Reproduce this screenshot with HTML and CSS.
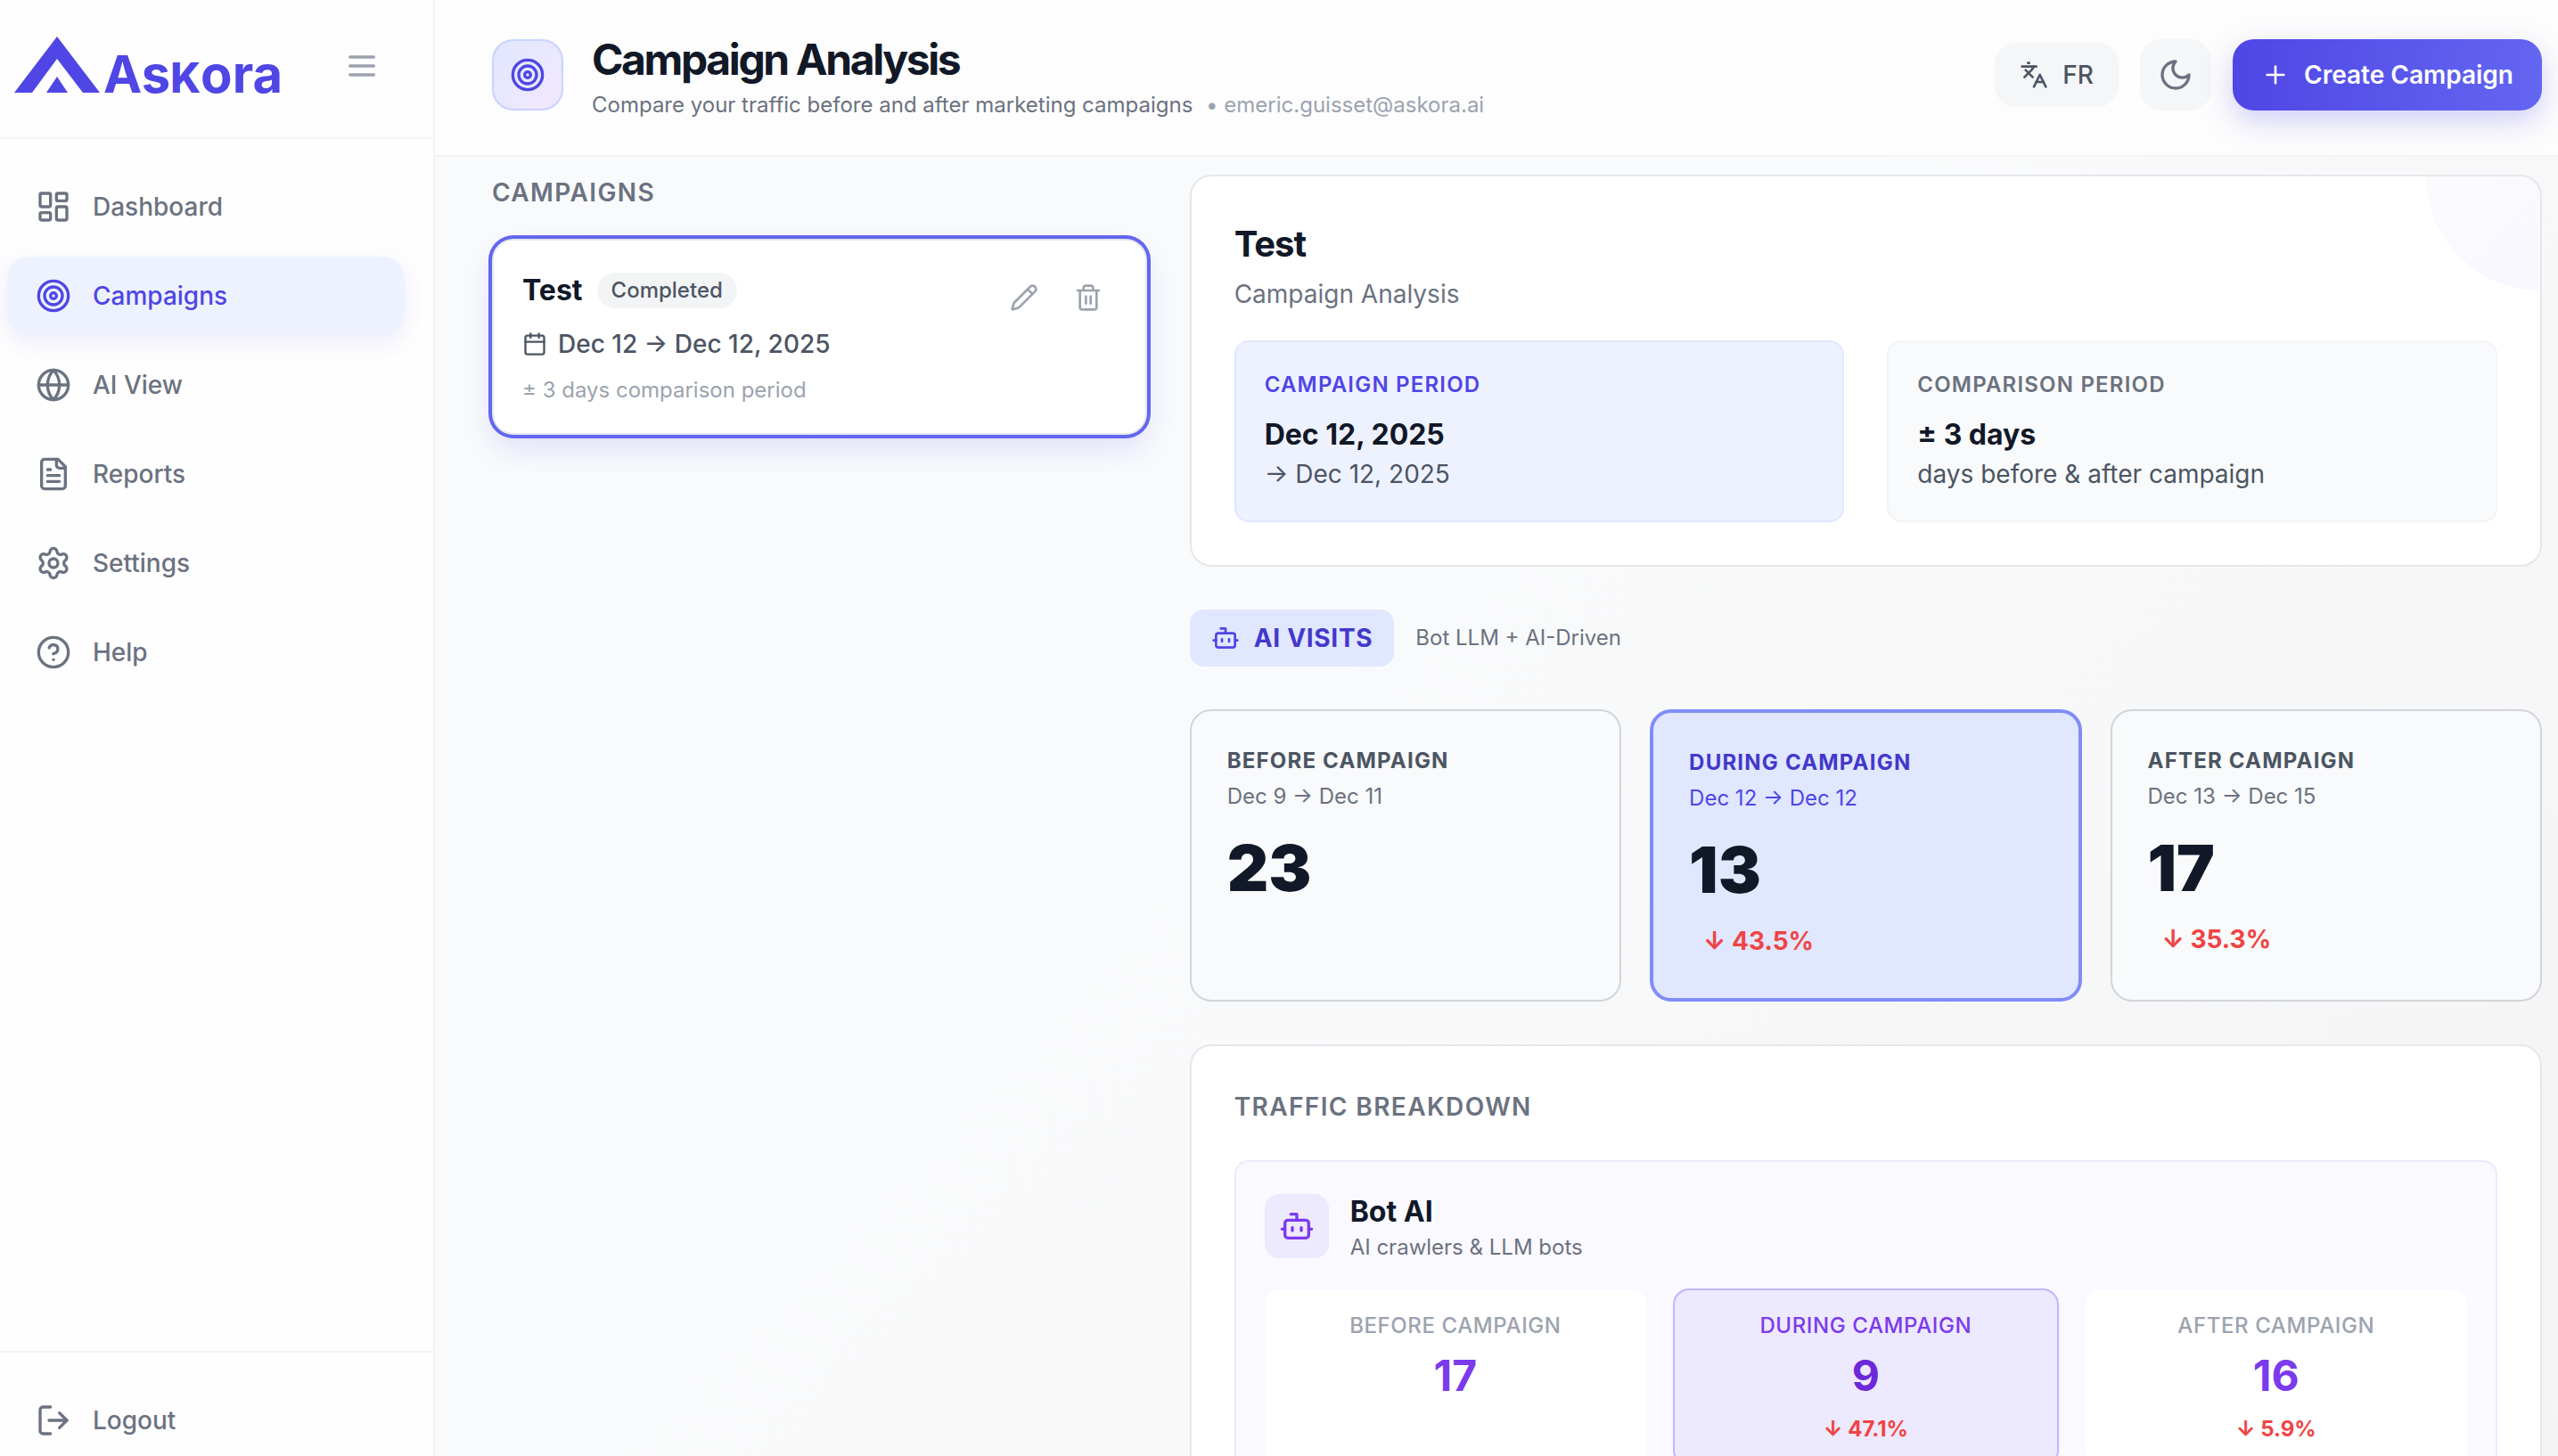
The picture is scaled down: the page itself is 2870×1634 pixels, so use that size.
FILE: index.html
```html
<!DOCTYPE html>
<html lang="en">
<head>
  <meta charset="UTF-8">
  <meta name="viewport" content="width=device-width, initial-scale=1.0">
  <title>Campaign Analysis - Askora</title>
  <link rel="stylesheet" href="styles.css">
</head>
<body>
  <!-- shared icons -->
  <svg class="sprite" aria-hidden="true">
    <symbol id="i-menu" viewBox="0 0 24 24"><path d="M4 6h16M4 12h16M4 18h16"/></symbol>
    <symbol id="i-dashboard" viewBox="0 0 24 24"><rect x="3" y="3" width="7" height="9" rx="1"/><rect x="14" y="3" width="7" height="5" rx="1"/><rect x="14" y="12" width="7" height="9" rx="1"/><rect x="3" y="16" width="7" height="5" rx="1"/></symbol>
    <symbol id="i-target" viewBox="0 0 24 24"><circle cx="12" cy="12" r="10"/><circle cx="12" cy="12" r="6"/><circle cx="12" cy="12" r="2"/></symbol>
    <symbol id="i-globe" viewBox="0 0 24 24"><circle cx="12" cy="12" r="10"/><path d="M12 2a14.5 14.5 0 0 0 0 20 14.5 14.5 0 0 0 0-20"/><path d="M2 12h20"/></symbol>
    <symbol id="i-file" viewBox="0 0 24 24"><path d="M15 2H6a2 2 0 0 0-2 2v16a2 2 0 0 0 2 2h12a2 2 0 0 0 2-2V7Z"/><path d="M14 2v4a2 2 0 0 0 2 2h4"/><path d="M10 9H8M16 13H8M16 17H8"/></symbol>
    <symbol id="i-settings" viewBox="0 0 24 24"><path d="M9.671 4.136a2.34 2.34 0 0 1 4.659 0 2.34 2.34 0 0 0 3.319 1.915 2.34 2.34 0 0 1 2.33 4.033 2.34 2.34 0 0 0 0 3.831 2.34 2.34 0 0 1-2.33 4.033 2.34 2.34 0 0 0-3.319 1.915 2.34 2.34 0 0 1-4.659 0 2.34 2.34 0 0 0-3.32-1.915 2.34 2.34 0 0 1-2.33-4.033 2.34 2.34 0 0 0 0-3.831A2.34 2.34 0 0 1 6.35 6.051a2.34 2.34 0 0 0 3.319-1.915"/><circle cx="12" cy="12" r="3"/></symbol>
    <symbol id="i-help" viewBox="0 0 24 24"><circle cx="12" cy="12" r="10"/><path d="M9.09 9a3 3 0 0 1 5.83 1c0 2-3 3-3 3"/><path d="M12 17h.01"/></symbol>
    <symbol id="i-logout" viewBox="0 0 24 24"><path d="M10 3H5a2 2 0 0 0-2 2v14a2 2 0 0 0 2 2h5"/><path d="m16 17 5-5-5-5"/><path d="M21 12H9"/></symbol>
    <symbol id="i-languages" viewBox="0 0 24 24"><path d="m5 8 6 6"/><path d="m4 14 6-6 2-3"/><path d="M2 5h12"/><path d="M7 2h1"/><path d="m22 22-5-10-5 10"/><path d="M14 18h6"/></symbol>
    <symbol id="i-moon" viewBox="0 0 24 24"><path d="M12 3a6 6 0 0 0 9 9 9 9 0 1 1-9-9Z"/></symbol>
    <symbol id="i-plus" viewBox="0 0 24 24"><path d="M5 12h14M12 5v14"/></symbol>
    <symbol id="i-pencil" viewBox="0 0 24 24"><path d="M21.174 6.812a1 1 0 0 0-3.986-3.987L3.842 16.174a2 2 0 0 0-.5.83l-1.321 4.352a.5.5 0 0 0 .623.622l4.353-1.32a2 2 0 0 0 .83-.497z"/><path d="m15 5 4 4"/></symbol>
    <symbol id="i-trash" viewBox="0 0 24 24"><path d="M3 6h18"/><path d="M19 6v14a2 2 0 0 1-2 2H7a2 2 0 0 1-2-2V6"/><path d="M8 6V4a2 2 0 0 1 2-2h4a2 2 0 0 1 2 2v2"/><path d="M10 11v6M14 11v6"/></symbol>
    <symbol id="i-calendar" viewBox="0 0 24 24"><path d="M8 2v4M16 2v4"/><rect x="3" y="4" width="18" height="18" rx="2"/><path d="M3 10h18"/></symbol>
    <symbol id="i-bot" viewBox="0 0 24 24"><path d="M12 8V4H8"/><rect x="4" y="8" width="16" height="12" rx="2"/><path d="M2 14h2M20 14h2M15 13v2M9 13v2"/></symbol>
  </svg>

  <div class="app">
    <aside class="sidebar">
      <div class="sidebar-top">
        <a class="logo" href="#">
          <svg class="logo-mark" viewBox="0 0 96 63" aria-hidden="true"><path d="M48 0 96 63H77L48 25 20 63H0Z"/><path d="M48 45 60 63H36Z"/></svg>
          <span>As<span class="logo-k">k</span>ora</span>
        </a>
        <button class="menu-btn" aria-label="Toggle menu"><svg class="icon icon-lg"><use href="#i-menu"/></svg></button>
      </div>
      <nav class="nav">
        <a class="nav-item" href="#"><svg class="icon icon-lg"><use href="#i-dashboard"/></svg>Dashboard</a>
        <a class="nav-item active" href="#"><svg class="icon icon-lg"><use href="#i-target"/></svg>Campaigns</a>
        <a class="nav-item" href="#"><svg class="icon icon-lg"><use href="#i-globe"/></svg>AI View</a>
        <a class="nav-item" href="#"><svg class="icon icon-lg"><use href="#i-file"/></svg>Reports</a>
        <a class="nav-item" href="#"><svg class="icon icon-lg"><use href="#i-settings"/></svg>Settings</a>
        <a class="nav-item" href="#"><svg class="icon icon-lg"><use href="#i-help"/></svg>Help</a>
      </nav>
      <div class="sidebar-bottom">
        <button class="nav-item"><svg class="icon icon-lg"><use href="#i-logout"/></svg>Logout</button>
      </div>
    </aside>

    <div class="page">
      <header class="header">
        <div class="header-icon"><svg class="icon icon-lg"><use href="#i-target"/></svg></div>
        <div class="header-text">
          <h1>Campaign Analysis</h1>
          <p>Compare your traffic before and after marketing campaigns <span class="email">• emeric.guisset@askora.ai</span></p>
        </div>
        <div class="header-actions">
          <button class="lang-btn"><svg class="icon icon-md"><use href="#i-languages"/></svg>FR</button>
          <button class="theme-btn" aria-label="Dark mode"><svg class="icon icon-lg"><use href="#i-moon"/></svg></button>
          <button class="create-btn"><svg class="icon icon-md"><use href="#i-plus"/></svg>Create Campaign</button>
        </div>
      </header>

      <main class="content">
        <section class="campaigns">
          <h2 class="section-title">Campaigns</h2>
          <article class="campaign">
            <div class="campaign-info">
              <div class="campaign-name">
                <h3>Test</h3>
                <span class="badge">Completed</span>
              </div>
              <p class="campaign-dates"><svg class="icon icon-sm"><use href="#i-calendar"/></svg>Dec 12 → Dec 12, 2025</p>
              <p class="campaign-note">± 3 days comparison period</p>
            </div>
            <div class="campaign-actions">
              <button aria-label="Edit campaign"><svg class="icon icon-md"><use href="#i-pencil"/></svg></button>
              <button aria-label="Delete campaign"><svg class="icon icon-md"><use href="#i-trash"/></svg></button>
            </div>
          </article>
        </section>

        <section class="analysis">
          <div class="card summary">
            <h2>Test</h2>
            <p class="summary-sub">Campaign Analysis</p>
            <div class="periods">
              <div class="period current">
                <h3>Campaign period</h3>
                <p class="period-value">Dec 12, 2025</p>
                <p class="period-text">→ Dec 12, 2025</p>
              </div>
              <div class="period">
                <h3>Comparison period</h3>
                <p class="period-value">± 3 days</p>
                <p class="period-text">days before &amp; after campaign</p>
              </div>
            </div>
          </div>

          <div class="visits-head">
            <h2 class="visits-tag"><svg class="icon icon-md"><use href="#i-bot"/></svg>AI VISITS</h2>
            <span>Bot LLM + AI-Driven</span>
          </div>

          <div class="stats">
            <div class="stat">
              <h3>Before campaign</h3>
              <p class="stat-dates">Dec 9 → Dec 11</p>
              <p class="stat-value">23</p>
            </div>
            <div class="stat during">
              <h3>During campaign</h3>
              <p class="stat-dates">Dec 12 → Dec 12</p>
              <p class="stat-value">13</p>
              <p class="stat-trend">↓ 43.5%</p>
            </div>
            <div class="stat">
              <h3>After campaign</h3>
              <p class="stat-dates">Dec 13 → Dec 15</p>
              <p class="stat-value">17</p>
              <p class="stat-trend">↓ 35.3%</p>
            </div>
          </div>

          <div class="card">
            <h2 class="section-title">Traffic breakdown</h2>
            <div class="source">
              <div class="source-head">
                <div class="source-icon"><svg class="icon icon-lg"><use href="#i-bot"/></svg></div>
                <div>
                  <h3>Bot AI</h3>
                  <p>AI crawlers &amp; LLM bots</p>
                </div>
              </div>
              <div class="source-grid">
                <div class="cell">
                  <h4>Before campaign</h4>
                  <p class="cell-value">17</p>
                </div>
                <div class="cell during">
                  <h4>During campaign</h4>
                  <p class="cell-value">9</p>
                  <p class="cell-trend">↓ 47.1%</p>
                </div>
                <div class="cell">
                  <h4>After campaign</h4>
                  <p class="cell-value">16</p>
                  <p class="cell-trend">↓ 5.9%</p>
                </div>
              </div>
            </div>
          </div>
        </section>
      </main>
    </div>
  </div>
</body>
</html>
```

FILE: styles.css
```css
* {
  box-sizing: border-box;
}
body {
  margin: 0;
  font-family: Inter, "Liberation Sans", sans-serif;
  font-size: 28px;
  line-height: 40px;
  color: #111827;
  background: #f9fafb;
}
h1, h2, h3, h4, p {
  margin: 0;
}
button {
  border: 0;
  padding: 0;
  background: none;
  font: inherit;
  color: inherit;
  cursor: pointer;
}
a {
  color: inherit;
  text-decoration: none;
}
.sprite {
  display: none;
}
.icon {
  flex: none;
  display: block;
  fill: none;
  stroke: currentColor;
  stroke-width: 2;
  stroke-linecap: round;
  stroke-linejoin: round;
}
.icon-sm {
  width: 28px;
  height: 28px;
}
.icon-md {
  width: 32px;
  height: 32px;
}
.icon-lg {
  width: 40px;
  height: 40px;
}
.app {
  display: flex;
  height: 100vh;
  overflow: hidden;
  background: linear-gradient(135deg, #f8fafc, #f9fafb 50%, #f4f4f5);
}

/* sidebar */
.sidebar {
  flex: none;
  display: flex;
  flex-direction: column;
  width: 488px;
  background: #fefefe;
  border-right: 2px solid #f3f4f6;
}
.sidebar-top {
  display: flex;
  justify-content: space-between;
  align-items: center;
  height: 156px;
  padding: 0 60px 6px 16px;
  border-bottom: 2px solid #f3f4f6;
}
.logo {
  display: flex;
  align-items: baseline;
  gap: 4px;
  font-size: 58px;
  font-weight: 700;
  line-height: 40px;
  color: #4f46e5;
}
.logo-mark {
  width: 96px;
  height: 63px;
  fill: currentColor;
}
.logo-k {
  font-size: 46px;
  font-weight: 800;
  text-transform: uppercase;
}
.menu-btn {
  color: #9ca3af;
}
.nav {
  flex: 1;
  display: flex;
  flex-direction: column;
  gap: 12px;
  padding: 32px 32px 0 8px;
}
.nav-item {
  display: flex;
  align-items: center;
  gap: 24px;
  height: 88px;
  padding: 0 32px;
  border-radius: 24px;
  font-weight: 500;
  color: #6b7280;
}
.nav-item.active {
  background: #eef2ff;
  color: #4f46e5;
  box-shadow: 0 8px 24px rgba(79, 70, 229, .1);
}
.sidebar-bottom {
  padding: 32px 32px 0 8px;
  margin-bottom: -4px;
  border-top: 2px solid #f3f4f6;
}

/* header */
.page {
  flex: 1;
  min-width: 0;
}
.header {
  display: flex;
  align-items: center;
  gap: 32px;
  height: 176px;
  padding: 0 18px 6px 64px;
  background: #fdfdfd;
  border-bottom: 2px solid #f3f4f6;
}
.header-icon {
  display: flex;
  padding: 18px;
  border: 2px solid #c7d2fe;
  border-radius: 24px;
  background: linear-gradient(135deg, #e0e7ff, #f3e8ff);
  color: #4f46e5;
}
.header-text {
  flex: 1;
}
.header h1 {
  font-size: 48px;
  font-weight: 700;
  line-height: 68px;
  letter-spacing: -.05em;
}
.header p {
  font-size: 24px;
  line-height: 34px;
  color: #6b7280;
}
.email {
  margin-left: 8px;
  color: #9ca3af;
}
.header-actions {
  display: flex;
  align-items: center;
  gap: 24px;
}
.lang-btn,
.create-btn {
  display: flex;
  align-items: center;
  gap: 16px;
}
.lang-btn {
  height: 72px;
  padding: 0 28px;
  border-radius: 24px;
  background: #f5f6f8;
  font-weight: 500;
  color: #4b5563;
}
.theme-btn {
  padding: 20px;
  border-radius: 24px;
  background: #f5f6f8;
  color: #6b7280;
}
.create-btn {
  height: 80px;
  padding: 0 32px;
  border-radius: 24px;
  background: linear-gradient(90deg, #4f46e5, #6366f1);
  box-shadow: 0 12px 32px rgba(79, 70, 229, .25);
  font-weight: 600;
  color: #fff;
}

/* content */
.content {
  display: grid;
  grid-template-columns: repeat(12, 1fr);
  gap: 48px;
  padding: 20px 18px 48px 64px;
}
.campaigns {
  grid-column: span 4;
}
.analysis {
  grid-column: span 8;
  display: flex;
  flex-direction: column;
  gap: 48px;
}
.section-title {
  font-size: 28px;
  font-weight: 600;
  letter-spacing: .05em;
  text-transform: uppercase;
  color: #6b7280;
}
.campaign {
  display: flex;
  justify-content: space-between;
  align-items: flex-start;
  margin-top: 32px;
  padding: 32px;
  border: 2px solid #e5e7eb;
  border-radius: 24px;
  background: #fff;
  box-shadow: 0 0 0 4px #6366f1, 0 16px 32px rgba(99, 102, 241, .16);
}
.campaign-name {
  display: flex;
  align-items: center;
  gap: 16px;
}
.campaign-name h3 {
  font-size: 32px;
  font-weight: 700;
  line-height: 48px;
}
.badge {
  padding: 4px 16px;
  border-radius: 20px;
  background: #f3f4f6;
  font-size: 24px;
  font-weight: 500;
  line-height: 32px;
  color: #4b5563;
}
.campaign-dates {
  display: flex;
  align-items: center;
  gap: 12px;
  margin-top: 16px;
  font-weight: 500;
  color: #4b5563;
}
.campaign-note {
  margin-top: 16px;
  font-size: 24px;
  line-height: 32px;
  color: #9ca3af;
}
.campaign-actions {
  display: flex;
  gap: 8px;
  color: #9ca3af;
}
.campaign-actions button {
  padding: 16px;
}
.card {
  padding: 48px;
  border: 2px solid #e5e7eb;
  border-radius: 24px;
  background: #fff;
}

/* campaign summary */
.summary {
  position: relative;
  overflow: hidden;
}
.summary::before {
  content: "";
  position: absolute;
  top: -128px;
  right: -128px;
  width: 256px;
  height: 256px;
  border-radius: 50%;
  background: linear-gradient(135deg, rgba(99, 102, 241, .02), rgba(139, 92, 246, .06));
}
.summary h2 {
  font-size: 40px;
  font-weight: 700;
  line-height: 56px;
  letter-spacing: -.025em;
}
.summary-sub {
  margin-top: 8px;
  color: #6b7280;
}
.periods {
  display: grid;
  grid-template-columns: 1fr 1fr;
  gap: 48px;
  margin-top: 32px;
}
.period {
  padding: 32px;
  border: 2px solid #f3f4f6;
  border-radius: 16px;
  background: #f9fafb;
}
.period h3 {
  font-size: 24px;
  font-weight: 600;
  line-height: 32px;
  letter-spacing: .05em;
  text-transform: uppercase;
  color: #6b7280;
}
.period-value {
  margin-top: 16px;
  font-size: 32px;
  font-weight: 700;
  line-height: 48px;
}
.period-text {
  color: #4b5563;
}
.period.current {
  border-color: #e0e7ff;
  background: #eef2ff;
}
.period.current h3 {
  color: #4f46e5;
}

/* visits */
.visits-head {
  display: flex;
  align-items: center;
  gap: 24px;
  font-size: 24px;
  color: #6b7280;
}
.visits-tag {
  display: flex;
  align-items: center;
  gap: 16px;
  padding: 12px 24px;
  border-radius: 16px;
  background: #e0e7ff;
  font-size: 28px;
  font-weight: 700;
  letter-spacing: .025em;
  color: #4338ca;
}
.visits-tag .icon {
  color: #4f46e5;
}
.stats {
  display: grid;
  grid-template-columns: repeat(3, 1fr);
  gap: 32px;
}
.stat {
  padding: 40px;
  border: 2px solid #d1d5db;
  border-radius: 24px;
  background: #f9fafb;
}
.stat h3 {
  font-size: 24px;
  font-weight: 700;
  line-height: 32px;
  letter-spacing: .05em;
  text-transform: uppercase;
  color: #4b5563;
}
.stat-dates {
  margin-top: 8px;
  font-size: 24px;
  line-height: 32px;
  color: #6b7280;
}
.stat-value {
  margin-top: 24px;
  font-size: 72px;
  font-weight: 900;
  line-height: 80px;
}
.stat-trend {
  margin-top: 16px;
  padding: 4px 16px;
  font-weight: 700;
  color: #ef4444;
}
.stat.during {
  border: 4px solid #818cf8;
  background: #e0e7ff;
}
.stat.during h3 {
  color: #4338ca;
}
.stat.during .stat-dates {
  color: #4f46e5;
}

/* traffic breakdown */
.source {
  margin-top: 40px;
  padding: 32px;
  border: 2px solid #ede9fe;
  border-radius: 16px;
  background: #faf9ff;
}
.source-head {
  display: flex;
  align-items: center;
  gap: 24px;
}
.source-icon {
  padding: 16px;
  border-radius: 16px;
  background: #ede9fe;
  color: #7c3aed;
}
.source-head h3 {
  font-size: 32px;
  font-weight: 700;
  line-height: 48px;
}
.source-head p {
  font-size: 24px;
  line-height: 32px;
  color: #6b7280;
}
.source-grid {
  display: grid;
  grid-template-columns: repeat(3, 1fr);
  gap: 32px;
  margin-top: 32px;
}
.cell {
  padding: 24px;
  border-radius: 16px;
  background: #fff;
  text-align: center;
}
.cell h4 {
  font-size: 24px;
  font-weight: 500;
  line-height: 32px;
  letter-spacing: .025em;
  text-transform: uppercase;
  color: #9ca3af;
}
.cell-value {
  margin-top: 8px;
  font-size: 48px;
  font-weight: 700;
  line-height: 64px;
  color: #7c3aed;
}
.cell-trend {
  margin-top: 12px;
  font-size: 24px;
  font-weight: 700;
  line-height: 32px;
  color: #ef4444;
}
.cell.during {
  background: #ede9fe;
  box-shadow: 0 0 0 2px #c4b5fd;
}
.cell.during h4 {
  color: #7c3aed;
}
.cell.during .cell-value {
  color: #6d28d9;
}
```
